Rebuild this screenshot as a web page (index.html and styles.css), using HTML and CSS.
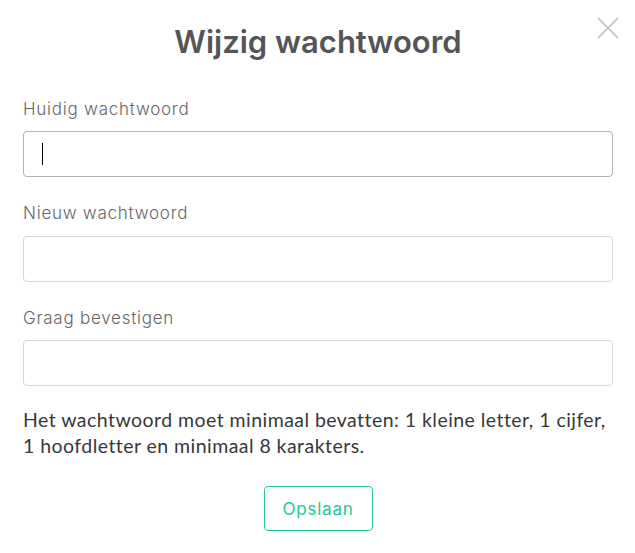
FILE: index.html
```html
<!DOCTYPE html>
<html lang="nl">
<head>
  <meta charset="UTF-8">
  <title>Wijzig wachtwoord</title>
  <meta name="viewport" content="width=device-width, initial-scale=1.0">
  <link rel="stylesheet" href="styles.css">
</head>
<body>

<div class="modal">
  <button class="close" aria-label="Sluiten">
    <svg width="22" height="22" viewBox="0 0 22 22">
      <path d="M1 1 L21 21 M21 1 L1 21" stroke="#c9c9c9" stroke-width="2" fill="none"/>
    </svg>
  </button>

  <h2 class="title">Wijzig wachtwoord</h2>

  <form class="form">
    <div class="fields">
      <div class="field">
        <label for="current">Huidig wachtwoord</label>
        <div class="input-wrap">
          <input id="current" class="input focused" type="password">
          <span class="caret"></span>
        </div>
      </div>

      <div class="field">
        <label for="new">Nieuw wachtwoord</label>
        <input id="new" class="input" type="password">
      </div>

      <div class="field">
        <label for="confirm">Graag bevestigen</label>
        <input id="confirm" class="input" type="password">
      </div>
    </div>

    <p class="hint">Het wachtwoord moet minimaal bevatten: 1 kleine letter, 1 cijfer, 1 hoofdletter en minimaal 8 karakters.</p>

    <div class="actions">
      <button type="button" class="save">Opslaan</button>
    </div>
  </form>
</div>

</body>
</html>
```

FILE: styles.css
```css
body {
  margin: 0;
  padding: 0;
  background: #fff;
  font-family: 'Inter', 'Noto Sans', sans-serif;
}

.modal {
  position: relative;
  padding: 22px 22px 20px 23px;
}

.close {
  position: absolute;
  top: 17px;
  right: 16px;
  padding: 0;
  border: none;
  background: none;
  cursor: pointer;
}

.close svg {
  display: block;
}

.title {
  margin: 0 0 34.5px;
  text-align: center;
  font-size: 31px;
  line-height: 40px;
  font-weight: 600;
  color: #555;
}

.fields {
  display: flex;
  flex-direction: column;
  gap: 24px;
}

.field label {
  display: block;
  margin-bottom: 10.5px;
  font-size: 17px;
  line-height: 24px;
  font-weight: 300;
  letter-spacing: 0.75px;
  color: #666;
}

.input-wrap {
  position: relative;
}

.input {
  display: block;
  box-sizing: border-box;
  width: 590px;
  height: 46px;
  padding: 0 18px;
  border: 1px solid #d3d7db;
  border-radius: 4px;
  font-size: 17px;
  outline: none;
}

.input.focused {
  border-color: #a8b3bc;
}

.caret {
  position: absolute;
  left: 19px;
  top: 12px;
  width: 1px;
  height: 22px;
  background: #000;
}

.hint {
  margin: 20.5px 0 27.5px;
  font-family: 'Lato', 'Noto Sans', sans-serif;
  font-size: 19.5px;
  line-height: 26px;
  letter-spacing: 0.45px;
  color: #383838;
}

.actions {
  display: flex;
  justify-content: center;
}

.save {
  width: 109px;
  height: 45px;
  border: 1px solid #20c997;
  border-radius: 4px;
  background: #fff;
  color: #20c997;
  font-family: 'Inter', 'Noto Sans', sans-serif;
  font-size: 17px;
  font-weight: 400;
  letter-spacing: 0.8px;
  cursor: pointer;
}
```
